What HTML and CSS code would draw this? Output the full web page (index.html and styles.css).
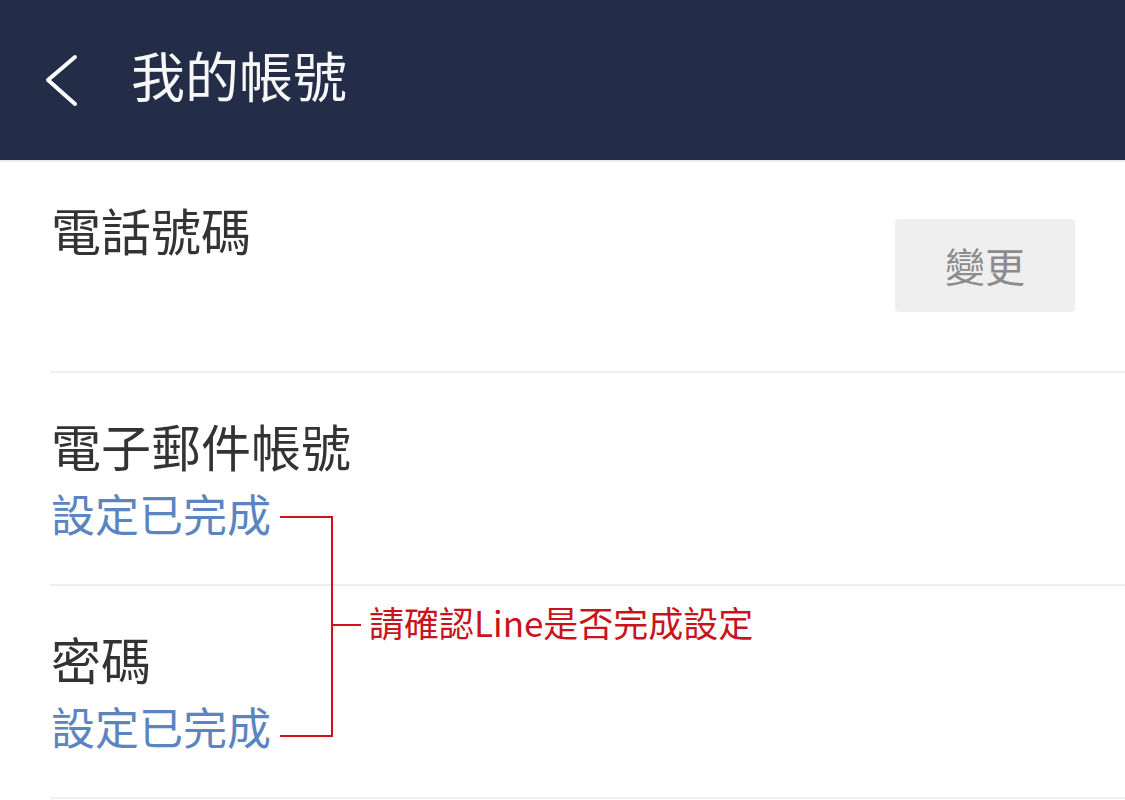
FILE: index.html
```html
<!DOCTYPE html>
<html lang="zh-Hant">
<head>
<meta charset="utf-8">
<title>我的帳號</title>
<link rel="stylesheet" href="styles.css">
</head>
<body>
<div class="page">
  <header class="topbar">
    <svg class="back" width="40" height="60" viewBox="0 0 40 60" aria-hidden="true">
      <polyline points="33,8 6,31 33,55" fill="none" stroke="#ffffff" stroke-width="4" stroke-linecap="round" stroke-linejoin="round"/>
    </svg>
    <h1 class="title">我的帳號</h1>
  </header>
  <main class="list">
    <section class="row">
      <div class="info">
        <div class="label">電話號碼</div>
        <div class="sub blank"></div>
      </div>
      <button class="change">變更</button>
    </section>
    <section class="row">
      <div class="info">
        <div class="label">電子郵件帳號</div>
        <div class="sub">設定已完成</div>
      </div>
    </section>
    <section class="row">
      <div class="info">
        <div class="label">密碼</div>
        <div class="sub">設定已完成</div>
      </div>
    </section>
  </main>
  <div class="note">
    <div class="bracket"></div>
    <div class="tick"></div>
    <div class="note-text">請確認Line是否完成設定</div>
  </div>
</div>
</body>
</html>
```

FILE: styles.css
```css
html, body {
  margin: 0;
  padding: 0;
  background: #ffffff;
}
body {
  font-family: "Noto Sans CJK TC", "Noto Sans", sans-serif;
  width: 1125px;
  height: 800px;
  overflow: hidden;
}
.page {
  position: relative;
  width: 1125px;
  height: 800px;
}
.topbar {
  height: 160px;
  background: #232d48;
  border-bottom: 2px solid #e9edf3;
  display: flex;
  align-items: center;
  padding-left: 42px;
  box-sizing: content-box;
}
.back {
  display: block;
  margin-top: -2px;
}
.title {
  margin: 0 0 0 49px;
  font-size: 54px;
  font-weight: 400;
  color: #f7f7f7;
  line-height: 60px;
  margin-top: -10px;
}
.list {
  padding-left: 50px;
}
.row {
  display: flex;
  align-items: center;
  border-bottom: 2px solid #efefef;
  padding: 42px 0 45px 1px;
}
.row:first-child {
  padding-top: 37px;
  padding-bottom: 48px;
}
.info {
  flex: 1;
}
.label {
  font-size: 50px;
  line-height: 60px;
  color: #333333;
}
.sub {
  margin-top: 12px;
  font-size: 44px;
  line-height: 52px;
  color: #5b85c0;
}
.sub.blank {
  height: 52px;
}
.change {
  width: 180px;
  height: 93px;
  margin-right: 50px;
  margin-top: 8px;
  border: none;
  border-radius: 4px;
  background: #efefef;
  color: #8c8c8c;
  font-family: "Noto Sans CJK TC", "Noto Sans", sans-serif;
  font-size: 40px;
  padding: 0;
}
.note {
  position: absolute;
  left: 280px;
  top: 516px;
  width: 500px;
  height: 220px;
}
.bracket {
  position: absolute;
  left: 0;
  top: 0;
  width: 51px;
  height: 217px;
  border: 2px solid #d0101a;
  border-left: none;
}
.tick {
  position: absolute;
  left: 53px;
  top: 108px;
  width: 28px;
  height: 2px;
  background: #d0101a;
}
.note-text {
  position: absolute;
  left: 89px;
  top: 82px;
  font-size: 35px;
  line-height: 48px;
  color: #c8141c;
  white-space: nowrap;
}
```
